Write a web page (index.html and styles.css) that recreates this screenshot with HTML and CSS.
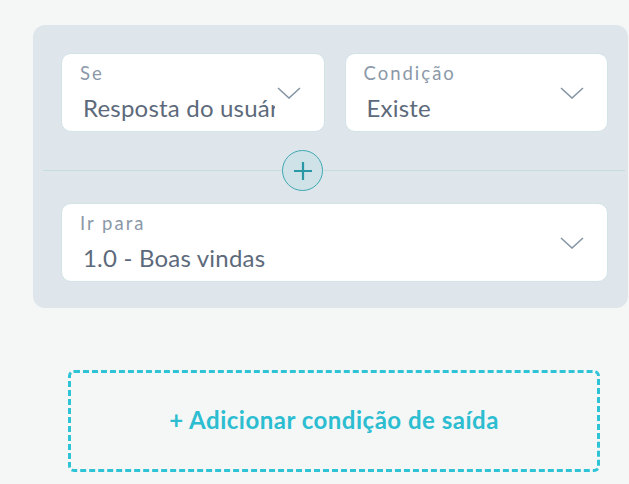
FILE: index.html
```html
<!DOCTYPE html>
<html lang="pt-BR">
<head>
    <meta charset="UTF-8">
    <meta name="viewport" content="width=device-width, initial-scale=1.0">
    <title>Condições de saída</title>
    <link rel="stylesheet" href="styles.css">
</head>
<body>
    <div class="panel">
        <div class="row">
            <div class="field">
                <div class="field-text">
                    <span class="field-label">Se</span>
                    <span class="field-value">Resposta do usuário</span>
                </div>
                <svg class="chevron" width="24" height="12" viewBox="0 0 24 12"><path d="M1 1 L12 11 L23 1"/></svg>
            </div>
            <div class="field">
                <div class="field-text">
                    <span class="field-label">Condição</span>
                    <span class="field-value">Existe</span>
                </div>
                <svg class="chevron" width="24" height="12" viewBox="0 0 24 12"><path d="M1 1 L12 11 L23 1"/></svg>
            </div>
        </div>

        <div class="divider">
            <button class="add-btn" type="button">
                <svg width="20" height="20" viewBox="0 0 20 20"><path d="M10 1 V19 M1 10 H19"/></svg>
            </button>
        </div>

        <div class="field">
            <div class="field-text">
                <span class="field-label">Ir para</span>
                <span class="field-value">1.0 - Boas vindas</span>
            </div>
            <svg class="chevron" width="24" height="12" viewBox="0 0 24 12"><path d="M1 1 L12 11 L23 1"/></svg>
        </div>
    </div>

    <div class="add-exit">+ Adicionar condição de saída</div>
</body>
</html>
```

FILE: styles.css
```css
* {
    margin: 0;
    padding: 0;
    box-sizing: border-box;
}

body {
    font-family: 'Lato', 'Open Sans', sans-serif;
    background-color: #f5f7f7;
    color: #5d6a7b;
}

.panel {
    width: 595px;
    margin: 25px 0 0 33px;
    padding: 28px 20px 26px 28px;
    background-color: #dee6eb;
    border-radius: 12px;
}

.row {
    display: flex;
    gap: 20px;
}

.field {
    flex: 1 1 0;
    min-width: 0;
    display: flex;
    align-items: center;
    height: 79px;
    padding: 9px 23px 9px 18px;
    background-color: #fff;
    border: 1px solid #d3e3e8;
    border-radius: 10px;
}

.field-text {
    flex: 1;
    min-width: 0;
    display: flex;
    flex-direction: column;
    align-self: stretch;
}

.field-label {
    font-size: 18.5px;
    line-height: 20px;
    letter-spacing: 2px;
    color: #8b98a8;
}

.field-value {
    margin: 10px 2px 0 0;
    padding-left: 3px;
    font-size: 24px;
    line-height: 30px;
    letter-spacing: 0.2px;
    white-space: nowrap;
    overflow: hidden;
    color: #5d6a7b;
}

.chevron {
    flex-shrink: 0;
    fill: none;
    stroke: #8796a5;
    stroke-width: 1.6;
}

.divider {
    height: 71px;
    margin: 0 -17px 0 -18px;
    padding: 18px 0 0 239px;
    background: linear-gradient(to bottom, transparent 38px, #c4dde2 38px, #c4dde2 39px, transparent 39px);
}

.add-btn {
    display: flex;
    align-items: center;
    justify-content: center;
    width: 41px;
    height: 41px;
    border: 1.5px solid #3ea8b3;
    border-radius: 50%;
    background-color: #cfe2e7;
    cursor: pointer;
}

.add-btn svg {
    fill: none;
    stroke: #2a98a4;
    stroke-width: 2.2;
}

.add-exit {
    display: flex;
    align-items: center;
    justify-content: center;
    width: 532px;
    height: 102px;
    margin: 62px 0 0 68px;
    padding-bottom: 4px;
    border: 3px dashed #2ec4d6;
    border-radius: 6px;
    font-size: 24px;
    font-weight: 700;
    letter-spacing: 0.5px;
    color: #2cbdd0;
    cursor: pointer;
}
```
